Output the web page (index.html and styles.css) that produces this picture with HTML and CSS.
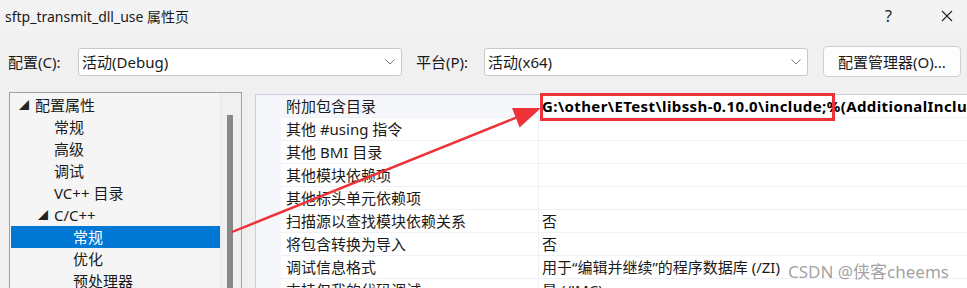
FILE: index.html
```html
<!DOCTYPE html>
<html lang="zh-CN">
<head>
<meta charset="utf-8">
<title>sftp_transmit_dll_use 属性页</title>
<link rel="stylesheet" href="styles.css">
</head>
<body>
<div class="window">
  <div class="titlebar">
    <span class="title">sftp_transmit_dll_use 属性页</span>
    <span class="help">?</span>
    <svg class="close" width="12" height="12" viewBox="0 0 12 12"><path d="M1 1 L11 11 M11 1 L1 11" stroke="#222" stroke-width="1.1" fill="none"/></svg>
  </div>
  <div class="toolbar">
    <span class="label">配置(C):</span>
    <div class="combo">
      <span>活动(Debug)</span>
      <svg class="chev" width="10" height="6" viewBox="0 0 10 6"><polyline points="0.5,0.5 5,5 9.5,0.5" stroke="#777" stroke-width="1" fill="none"/></svg>
    </div>
    <span class="label label2">平台(P):</span>
    <div class="combo">
      <span>活动(x64)</span>
      <svg class="chev" width="10" height="6" viewBox="0 0 10 6"><polyline points="0.5,0.5 5,5 9.5,0.5" stroke="#777" stroke-width="1" fill="none"/></svg>
    </div>
    <button class="btn">配置管理器(O)...</button>
  </div>
  <div class="main">
    <div class="tree">
      <div class="tree-list">
        <div class="node l1"><span class="tri">◢</span>配置属性</div>
        <div class="node l2">常规</div>
        <div class="node l2">高级</div>
        <div class="node l2">调试</div>
        <div class="node l2">VC++ 目录</div>
        <div class="node l2c"><span class="tri">◢</span>C/C++</div>
        <div class="node l3 sel">常规</div>
        <div class="node l3">优化</div>
        <div class="node l3">预处理器</div>
      </div>
      <div class="scroll"><div class="thumb"></div></div>
    </div>
    <div class="grid">
      <div class="row first"><div class="gut"></div><div class="name">附加包含目录</div><div class="val bold">G:\other\ETest\libssh-0.10.0\include;%(AdditionalIncludeDirectories)</div></div>
      <div class="row"><div class="gut"></div><div class="name">其他 #using 指令</div><div class="val"></div></div>
      <div class="row"><div class="gut"></div><div class="name">其他 BMI 目录</div><div class="val"></div></div>
      <div class="row"><div class="gut"></div><div class="name">其他模块依赖项</div><div class="val"></div></div>
      <div class="row"><div class="gut"></div><div class="name">其他标头单元依赖项</div><div class="val"></div></div>
      <div class="row"><div class="gut"></div><div class="name">扫描源以查找模块依赖关系</div><div class="val">否</div></div>
      <div class="row"><div class="gut"></div><div class="name">将包含转换为导入</div><div class="val">否</div></div>
      <div class="row"><div class="gut"></div><div class="name">调试信息格式</div><div class="val">用于“编辑并继续”的程序数据库 (/ZI)</div></div>
      <div class="row"><div class="gut"></div><div class="name">支持仅我的代码调试</div><div class="val">是 (/JMC)</div></div>
    </div>
  </div>
  <svg class="annot" width="967" height="288" viewBox="0 0 967 288">
    <rect x="541.5" y="94.5" width="292" height="25" fill="none" stroke="#ee3338" stroke-width="3"/>
    <line x1="232" y1="232" x2="516" y2="117.7" stroke="#ee3338" stroke-width="2.4"/>
    <polygon points="541,108 519.6,127.5 512,108" fill="#ee3338"/>
  </svg>
  <div class="watermark">CSDN @侠客cheems</div>
</div>
</body>
</html>
```
FILE: styles.css
```css
html, body {
  margin: 0;
  padding: 0;
}
body {
  background: #f0f0f0;
  font-family: "Noto Sans", "Noto Sans CJK SC", sans-serif;
  font-size: 15px;
  color: #1a1a1a;
  width: 967px;
  height: 288px;
  overflow: hidden;
}
.window {
  position: relative;
  width: 967px;
  height: 288px;
  overflow: hidden;
}
.titlebar {
  height: 31px;
  background: #f3f3f3;
  display: flex;
  align-items: center;
  padding-left: 5px;
}
.title {
  flex: 1;
  font-size: 14px;
  color: #1a1a1a;
}
.help {
  font-size: 16px;
  color: #222;
  margin-right: 49px;
}
.close {
  margin-right: 14px;
}
.toolbar {
  display: flex;
  align-items: center;
  height: 31px;
  margin-top: 15px;
  padding-left: 8px;
}
.label {
  width: 70px;
  flex: none;
}
.label2 {
  margin-left: 14px;
  width: 68px;
}
.combo {
  box-sizing: border-box;
  flex: none;
  width: 324px;
  height: 28px;
  background: #fff;
  border: 1px solid #c8c8c8;
  border-radius: 3px;
  display: flex;
  align-items: center;
  justify-content: space-between;
  padding: 0 6px 0 3px;
}
.btn {
  box-sizing: border-box;
  flex: none;
  margin-left: 15px;
  width: 138px;
  height: 31px;
  background: #fdfdfd;
  border: 1px solid #cfcfcf;
  border-radius: 4px;
  font-family: inherit;
  font-size: 15px;
  color: #1a1a1a;
  padding: 0;
}
.main {
  display: flex;
  align-items: flex-start;
  margin-top: 15px;
  padding-left: 9px;
}
.tree {
  box-sizing: border-box;
  flex: none;
  width: 233px;
  height: 220px;
  border: 1px solid #a0a0a0;
  display: flex;
  background: #f5f5f5;
}
.tree-list {
  width: 210px;
  flex: none;
  padding-top: 1px;
}
.node {
  height: 22px;
  line-height: 22px;
  white-space: nowrap;
  position: relative;
}
.tri {
  position: absolute;
  font-size: 10px;
  color: #222;
  top: 0;
}
.l1 { padding-left: 25px; }
.l1 .tri { left: 9px; }
.l2 { padding-left: 44px; }
.l2c { padding-left: 44px; }
.l2c .tri { left: 28px; }
.l3 { padding-left: 63px; }
.sel {
  background: #0078d4;
  color: #fff;
  margin-left: 1px;
  padding-left: 62px;
}
.scroll {
  flex: 1;
  background: #f0f0f0;
  border-left: 1px solid #e6e6e6;
  position: relative;
}
.thumb {
  position: absolute;
  left: 6px;
  top: 22px;
  width: 6px;
  height: 200px;
  background: #888;
}
.grid {
  margin-left: 13px;
  margin-top: 2px;
  flex: 1;
  min-width: 0;
  overflow: hidden;
  border-left: 1px solid #c9d0da;
  border-top: 1px solid #c9d0da;
  background: #fff;
}
.row {
  display: flex;
  height: 23px;
  line-height: 22px;
  box-sizing: border-box;
  white-space: nowrap;
}
.gut {
  width: 25px;
  flex: none;
  background: #f5f7fa;
}
.name {
  width: 258px;
  flex: none;
  box-sizing: border-box;
  padding-left: 5px;
  border-bottom: 1px solid #eef1f5;
  border-right: 1px solid #eef1f5;
}
.val {
  flex: 1;
  min-width: 0;
  overflow: hidden;
  padding-left: 3px;
  border-bottom: 1px solid #eef1f5;
}
.first .name {
  background: #f5f7fa;
}
.bold {
  font-weight: bold;
  color: #000;
  letter-spacing: 0.4px;
}
.annot {
  position: absolute;
  left: 0;
  top: 0;
  pointer-events: none;
}
.watermark {
  position: absolute;
  left: 788px;
  top: 258px;
  font-size: 17px;
  color: rgba(120, 120, 120, 0.7);
  white-space: nowrap;
}
```
